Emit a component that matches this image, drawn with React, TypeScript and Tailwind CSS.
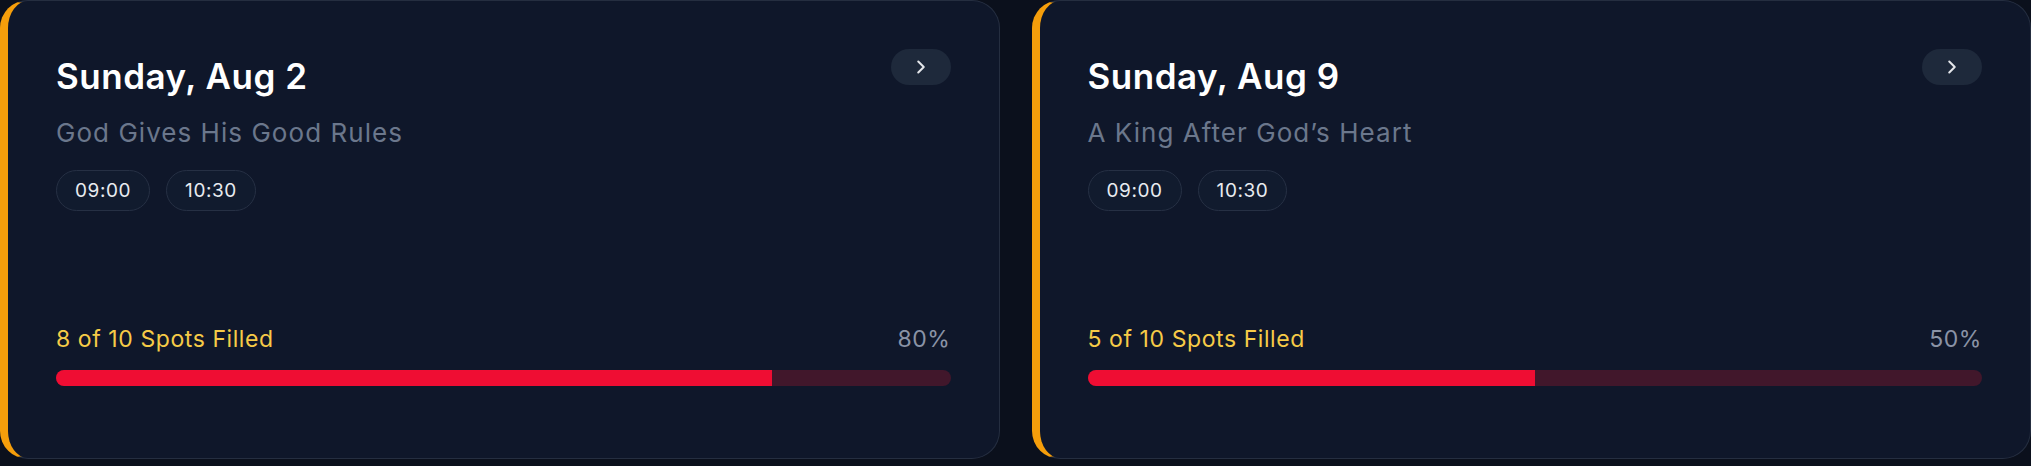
import { ChevronRight } from "lucide-react";

type Service = {
  id: string;
  date: string;
  lesson: string;
  times: string[];
  filled: number;
  capacity: number;
};

const services: Service[] = [
  {
    id: "aug-2",
    date: "Sunday, Aug 2",
    lesson: "God Gives His Good Rules",
    times: ["09:00", "10:30"],
    filled: 8,
    capacity: 10,
  },
  {
    id: "aug-9",
    date: "Sunday, Aug 9",
    lesson: "A King After God\u2019s Heart",
    times: ["09:00", "10:30"],
    filled: 5,
    capacity: 10,
  },
];

const ServiceCard = ({ service }: { service: Service }) => {
  const percent = Math.round((service.filled / service.capacity) * 100);

  return (
    <div className="flex h-[459px] flex-col rounded-[28px] border border-l-8 border-[#252e40] border-l-[#f59e0b] bg-[#0f172a] pb-[72px] pl-12 pr-12 pt-12">
      {/* Header: date, lesson and open button */}
      <div className="flex items-start justify-between">
        <div className="flex flex-col">
          <h2 className="mt-[7px] text-[35px] font-semibold leading-[40px] tracking-[0.015em] text-white">
            {service.date}
          </h2>
          <p className="mt-[21px] text-[26px] leading-8 tracking-[0.04em] text-[#6b778c]">
            {service.lesson}
          </p>
          <div className="mt-[21px] flex gap-4">
            {service.times.map((t) => (
              <span
                key={t}
                className="rounded-full border border-[#263044] bg-[#111b2e] px-[18px] py-[5.5px] text-[19px] leading-7 tracking-[0.03em] text-[#e8ebf0]"
              >
                {t}
              </span>
            ))}
          </div>
        </div>
        <button className="flex h-9 w-[60px] items-center justify-center rounded-full bg-[#1e293b] text-[#e5e7eb]">
          <ChevronRight size={22} strokeWidth={2.2} />
        </button>
      </div>

      {/* Capacity */}
      <div className="mt-auto">
        <div className="flex items-center justify-between text-[23px] leading-7 tracking-[0.025em]">
          <span className="text-[#f6cb47]">
            {service.filled} of {service.capacity} Spots Filled
          </span>
          <span className="text-[#8a93a6]">{percent}%</span>
        </div>
        <div className="mt-[17px] h-4 w-full overflow-hidden rounded-full bg-[#41172b]">
          <div className="h-full bg-[#ef0d33]" style={{ width: `${percent}%` }} />
        </div>
      </div>
    </div>
  );
};

export default function App() {
  return (
    <div
      className="min-h-[466px] w-full bg-[#0b101c]"
      style={{ fontFamily: "Inter, 'Noto Sans', sans-serif" }}
    >
      <div className="grid grid-cols-2 gap-8">
        {services.map((s) => (
          <ServiceCard key={s.id} service={s} />
        ))}
      </div>
    </div>
  );
}
